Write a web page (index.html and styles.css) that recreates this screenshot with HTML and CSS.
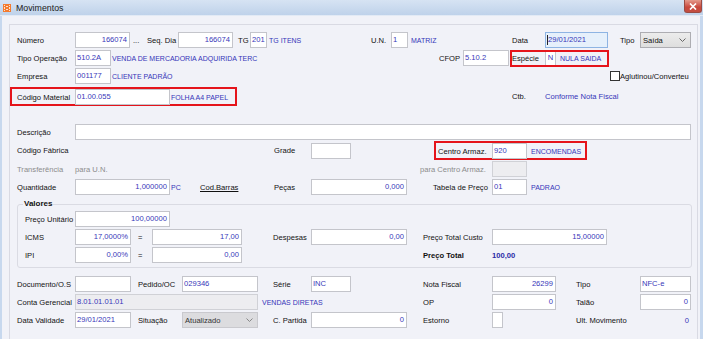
FILE: index.html
```html
<!DOCTYPE html>
<html lang="pt-BR">
<head>
    <meta charset="UTF-8">
    <title>Movimentos</title>
    <link rel="stylesheet" href="styles.css">
</head>
<body>
<div class="window">
    <div class="titlebar">
        <svg class="app-icon" width="8" height="8" viewBox="0 0 8 8"><rect width="8" height="8" fill="#f47b2f"/><path d="M1 1h1v1H1zM6 1h1v1H6zM3 2h2v1H3zM1 3h1v2H1zM6 3h1v2H6zM3 5h2v1H3zM1 6h1v1H1zM6 6h1v1H6z" fill="#fde3cf"/></svg>
        <span class="title">Movimentos</span>
        <span class="close"><svg width="8" height="7" viewBox="0 0 8 7"><path d="M1 0.5L7 6.5M7 0.5L1 6.5" stroke="#fff" stroke-width="1.7"/></svg></span>
    </div>
    <div class="client">
        <div class="panel">
            <div class="row r1">
                <span>Número</span>
                <div class="box num w55">166074</div>
                <span>...</span>
                <span>Seq. Dia</span>
                <div class="box num w55">166074</div>
                <span>TG</span>
                <div class="box w17">201</div>
                <span class="val">TG ITENS</span>
                <span>U.N.</span>
                <div class="box w17">1</div>
                <span class="val">MATRIZ</span>
                <span>Data</span>
                <div class="box focus w63"><span class="caret"></span>29/01/2021</div>
                <span>Tipo</span>
                <div class="combo w51"><span>Saída</span><svg width="7" height="4" viewBox="0 0 7 4"><path d="M0.5 0.5L3.5 3.5L6.5 0.5" fill="none" stroke="#666"/></svg></div>
            </div>
            <div class="row r2">
                <span>Tipo Operação</span>
                <div class="box w36">510.2A</div>
                <span class="val">VENDA DE MERCADORIA ADQUIRIDA TERC</span>
                <span>CFOP</span>
                <div class="box w46">5.10.2</div>
                <div class="mark mark-especie">
                    <span>Espécie</span>
                    <div class="box small w11">N</div>
                    <span class="val">NULA SAIDA</span>
                </div>
            </div>
            <div class="row r3">
                <span>Empresa</span>
                <div class="box w36">001177</div>
                <span class="val">CLIENTE PADRÃO</span>
                <span class="check"></span>
                <span>Aglutinou/Converteu</span>
            </div>
            <div class="row r4">
                <div class="mark mark-material">
                    <span class="pad5">Código Material</span>
                    <div class="box w95">01.00.055</div>
                    <span class="val">FOLHA A4 PAPEL</span>
                </div>
                <span></span>
                <span>Ctb.</span>
                <span class="link">Conforme Nota Fiscal</span>
            </div>
            <div class="row r5">
                <span>Descrição</span>
                <div class="box w616"></div>
            </div>
            <div class="row r6">
                <span>Código Fábrica</span>
                <span>Grade</span>
                <div class="box w40"></div>
                <div class="mark mark-centro">
                    <span class="pad2">Centro Armaz.</span>
                    <div class="box w35">920</div>
                    <span class="val">ENCOMENDAS</span>
                </div>
            </div>
            <div class="row r7">
                <span class="muted">Transferência</span>
                <span class="muted">para U.N.</span>
                <span class="muted">para Centro Armaz.</span>
                <div class="box off w35"></div>
            </div>
            <div class="row r8">
                <span>Quantidade</span>
                <div class="box num w95">1,000000</div>
                <span class="val">PC</span>
                <span class="under">Cod.Barras</span>
                <span>Peças</span>
                <div class="box num w96">0,000</div>
                <span>Tabela de Preço</span>
                <div class="box w35">01</div>
                <span class="val">PADRAO</span>
            </div>

            <fieldset class="valores">
                <legend>Valores</legend>
                <div class="row r9">
                    <span>Preço Unitário</span>
                    <div class="box num w95">100,00000</div>
                </div>
                <div class="row r10">
                    <span>ICMS</span>
                    <div class="box num w56">17,0000%</div>
                    <span>=</span>
                    <div class="box num w90">17,00</div>
                    <span>Despesas</span>
                    <div class="box num w96">0,00</div>
                    <span>Preço Total Custo</span>
                    <div class="box num w115">15,00000</div>
                </div>
                <div class="row r11">
                    <span>IPI</span>
                    <div class="box num w56">0,00%</div>
                    <span>=</span>
                    <div class="box num w90">0,00</div>
                    <span class="strong">Preço Total</span>
                    <span class="strong total">100,00</span>
                </div>
            </fieldset>

            <div class="row r12">
                <span>Documento/O.S</span>
                <div class="box w56"></div>
                <span>Pedido/OC</span>
                <div class="box w76">029346</div>
                <span>Série</span>
                <div class="box w40">INC</div>
                <span>Nota Fiscal</span>
                <div class="box num w64">26299</div>
                <span>Tipo</span>
                <div class="box w51">NFC-e</div>
            </div>
            <div class="row r13">
                <span>Conta Gerencial</span>
                <div class="box off w183">8.01.01.01.01</div>
                <span class="val">VENDAS DIRETAS</span>
                <span>OP</span>
                <div class="box num w64">0</div>
                <span>Talão</span>
                <div class="box num w51">0</div>
            </div>
            <div class="row r14">
                <span>Data Validade</span>
                <div class="box w56">29/01/2021</div>
                <span>Situação</span>
                <div class="combo off w76"><span>Atualizado</span><svg width="7" height="4" viewBox="0 0 7 4"><path d="M0.5 0.5L3.5 3.5L6.5 0.5" fill="none" stroke="#888"/></svg></div>
                <span>C. Partida</span>
                <div class="box num w96">0</div>
                <span>Estorno</span>
                <div class="box w11"></div>
                <div class="last">
                    <span>Ult. Movimento</span>
                    <span class="link">0</span>
                </div>
            </div>
        </div>
    </div>
</div>
</body>
</html>
```

FILE: styles.css
```css
body {
    margin: 0;
    font-family: "Liberation Sans", Arial, sans-serif;
    font-size: 7.6px;
    color: #111;
    background: #f1f2f8;
}
.window {
    width: 703px;
    height: 339px;
    overflow: hidden;
    background: #f1f2f8;
}
.titlebar {
    height: 15px;
    display: flex;
    align-items: center;
    padding-left: 3px;
    background: linear-gradient(#d6e3f3, #bfd2ea);
    border-bottom: 1px solid #e2eaf5;
}
.app-icon {
    display: block;
}
.title {
    margin-left: 5px;
    font-size: 8.8px;
    color: #1b1b1b;
}
.close {
    margin-left: auto;
    margin-right: 1px;
    align-self: flex-start;
    width: 18px;
    height: 13px;
    box-sizing: border-box;
    display: flex;
    align-items: center;
    justify-content: center;
    background: linear-gradient(#e49a8c, #c9483d 60%, #c24e42);
    border: 1px solid #9a4a42;
    border-top: none;
    border-radius: 0 0 3px 3px;
}
.client {
    height: 323px;
    box-sizing: border-box;
    border-left: 2px solid #c7d8ee;
    border-right: 3px solid #c7d8ee;
    padding: 8px 2px 0 7px;
}
.panel {
    height: 330px;
    border: 1px solid #d9dae3;
    padding: 6px 0 0 7px;
    box-sizing: border-box;
}

/* rows */
.row {
    display: grid;
    height: 18px;
    align-items: center;
    white-space: nowrap;
}
.r1 { grid-template-columns: 58px 58px 14px 31px 60px 12px 19px 102px 20px 20px 101px 33px 75px 20px 51px; }
.r2 { grid-template-columns: 58px 37px 327px 24px 47px auto; }
.r3 { grid-template-columns: 58px 37px 498px 10px auto; }
.r4 { grid-template-columns: 220px 275px 33px auto; height: 19px; margin-top: 2px; }
.r5 { grid-template-columns: 58px auto; margin-top: 17px; }
.r6 { grid-template-columns: 257px 37px 123px auto; height: 19px; }
.r7 { grid-template-columns: 58px 345px 72px auto; }
.r8 { grid-template-columns: 58px 96px 29px 74px 37px 122px 59px 39px auto; }
.r9 { grid-template-columns: 50px auto; }
.r10 { grid-template-columns: 50px 63px 14px 121px 38px 112px 69px auto; }
.r11 { grid-template-columns: 50px 63px 14px 271px 69px auto; }
.r12 { grid-template-columns: 58px 63px 44px 91px 38px 112px 69px 84px 64px auto; margin-top: 7px; }
.r13 { grid-template-columns: 58px 187px 161px 69px 84px 64px auto; }
.r14 { grid-template-columns: 58px 63px 44px 91px 38px 112px 69px 84px 113px; }

/* edit boxes */
.box {
    height: 16px;
    box-sizing: border-box;
    border: 1px solid #c4c5cb;
    background: #fff;
    line-height: 14px;
    padding: 0 1px;
    color: #3737b9;
    overflow: hidden;
}
.num {
    text-align: right;
    padding-right: 2px;
}
.box.off {
    background: #ededf0;
    border-color: #d0d1d6;
}
.box.focus {
    background: #e6f0fb;
    border-color: #8eb4e3;
    display: flex;
    align-items: center;
}
.box.small {
    height: 13px;
    line-height: 11px;
    border-top: none;
    border-bottom: none;
    text-align: center;
    padding: 0;
}
.caret {
    width: 1px;
    height: 10px;
    background: #222;
}
.combo {
    height: 16px;
    box-sizing: border-box;
    border: 1px solid #adadb2;
    background: linear-gradient(#ececec, #dedede);
    display: flex;
    align-items: center;
    justify-content: space-between;
    padding: 0 4px 0 2px;
}
.combo.off {
    background: #dcdcdf;
    border-color: #c9c9ce;
    color: #333;
}
.check {
    width: 10px;
    height: 10px;
    box-sizing: border-box;
    border: 1px solid #333;
    background: #fff;
}

.w11 { width: 11px; }
.w17 { width: 17px; }
.w35 { width: 35px; }
.w36 { width: 36px; }
.w40 { width: 40px; }
.w46 { width: 46px; }
.w51 { width: 51px; }
.w55 { width: 55px; }
.w56 { width: 56px; }
.w63 { width: 63px; }
.w64 { width: 64px; }
.w76 { width: 76px; }
.w90 { width: 90px; }
.w95 { width: 95px; }
.w96 { width: 96px; }
.w115 { width: 115px; }
.w183 { width: 183px; }
.w616 { width: 616px; }

/* texts */
.val {
    color: #3535b8;
    font-size: 7px;
}
.link {
    color: #3535b8;
}
.muted {
    color: #8c8c8c;
}
.under {
    text-decoration: underline;
}
.strong {
    font-weight: bold;
}
.total {
    color: #2a2aa6;
}
.pad2 { padding-left: 2px; }
.pad5 { padding-left: 5px; }

/* red highlight frames */
.mark {
    display: grid;
    align-items: center;
    box-sizing: border-box;
    border: 2px solid #e5141b;
}
.mark-especie {
    width: 99px;
    height: 17px;
    grid-template-columns: 33px 15px auto;
}
.mark-material {
    width: 227px;
    height: 19px;
    margin-left: -7px;
    grid-template-columns: 63px 96px auto;
}
.mark-centro {
    width: 153px;
    height: 19px;
    grid-template-columns: 56px 39px auto;
}

/* Valores group */
.valores {
    margin: 3px 0 0 0;
    width: 675px;
    box-sizing: border-box;
    min-width: 0;
    padding: 1px 0 3px 7px;
    border: 1px solid #dadbe3;
    border-radius: 3px;
}
.valores legend {
    font-weight: bold;
    font-size: 8px;
    line-height: 10px;
    padding: 0 1px;
    margin-left: -2px;
    color: #111;
}
.last {
    display: flex;
    justify-content: space-between;
}
```
